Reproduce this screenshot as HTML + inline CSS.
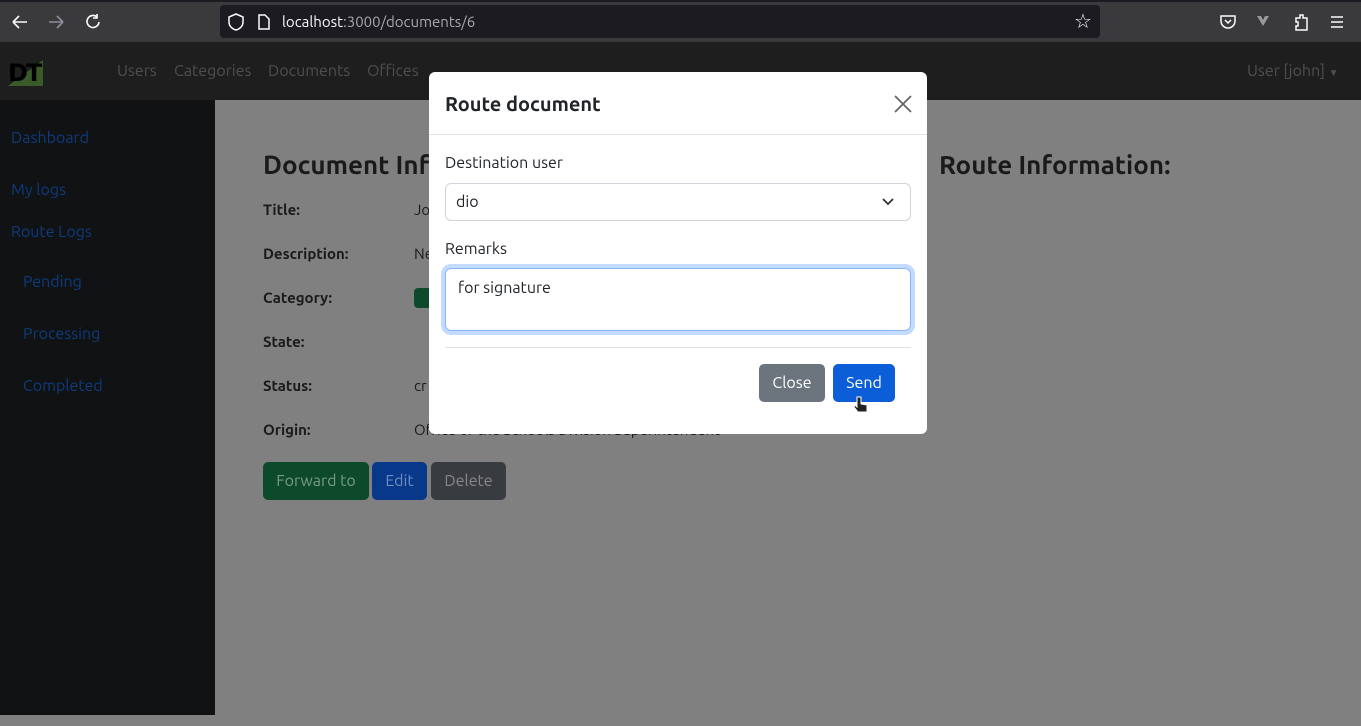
<!DOCTYPE html>
<html><head><meta charset="utf-8"><style>
*{box-sizing:border-box;margin:0;padding:0}
body{width:1361px;height:726px;overflow:hidden;background:#808080;font-family:"Ubuntu","Liberation Sans","DejaVu Sans",sans-serif;position:relative}
.abs{position:absolute}
.tb{left:0;top:0;width:1361px;height:42px;background:#3a3a3d;border-top:2px solid #1c1b22}
.url{left:220px;top:5px;width:880px;height:33px;background:#1c1b22;border-radius:4px;color:#fbfbfe;font-size:15px;line-height:33px;padding-left:62px}
.nav{left:0;top:42px;width:1361px;height:58px;background:#1e1e1e}
.nav a{position:absolute;top:20px;color:#4d4f52;font-size:16px}
.side{left:0;top:100px;width:215px;height:615px;background:#111214}
.side div{position:absolute;color:#0d3b7e;font-size:16px}
.lbl{position:absolute;left:263px;font-weight:bold;font-size:15px;color:#1a1a1a}
.val{position:absolute;left:414px;font-size:15px;color:#1a1a1a}
.btn{position:absolute;top:462px;height:38px;border-radius:5px;font-size:16px;line-height:38px;text-align:center}
.modal{left:429px;top:72px;width:498px;height:362px;background:#fff;border-radius:6px}
</style></head><body>
<div class="abs tb"></div>
<svg class="abs" style="left:8px;top:10px" width="100" height="24" fill="none" stroke="#fbfbfe" stroke-width="1.6">
<path d="M5 12h14M5 12l6-6M5 12l6 6"/>
<path d="M41 12h14M55 12l-6-6M55 12l-6 6" stroke="#8f8f9d"/>
<path d="M89 7a6 6 0 1 0 2 5M89 4v4h-4"/>
</svg>
<div class="abs url">localhost<span style="color:#aaa">:3000/documents/6</span></div>
<svg class="abs" style="left:226px;top:12px" width="48" height="20" fill="none" stroke="#fbfbfe" stroke-width="1.5">
<path d="M10 2l7 3v5c0 4-3 7-7 8-4-1-7-4-7-8V5z"/><path d="M33 3h6l4 4v10H33z"/></svg>
<div class="abs" style="left:1074px;top:9px;color:#fbfbfe;font-size:20px">☆</div>
<svg class="abs" style="left:1218px;top:12px" width="130" height="20" fill="none" stroke="#fbfbfe" stroke-width="1.5">
<path d="M3 4h14v5a7 7 0 0 1-14 0z M7 8l3 3 3-3"/>
<path d="M39 4l6 10 6-10h-4l-2 4-2-4z" fill="#9a9a9a" stroke="none"/>
<path d="M78 6h4V3h3v3h4v12h-11v-4h2v-4h-2z"/>
<path d="M113 5h12M113 10h12M113 15h12"/></svg>
<div class="abs nav">
<div class="abs" style="left:8px;top:18px;width:35px;height:26px;background:#3a5a28;clip-path:polygon(100% 0,100% 100%,0 100%)"></div>
<div class="abs" style="left:8px;top:17px;font-weight:900;font-size:24px;color:#000;font-family:'DejaVu Sans',sans-serif;letter-spacing:-2px">DT</div>
<a style="left:117px">Users</a><a style="left:174px">Categories</a><a style="left:268px">Documents</a><a style="left:367px">Offices</a>
<a style="left:1247px">User [john] <span style="font-size:10px">▼</span></a>
</div>
<div class="abs side">
<div style="left:11px;top:29px">Dashboard</div>
<div style="left:11px;top:81px">My logs</div>
<div style="left:11px;top:123px">Route Logs</div>
<div style="left:23px;top:173px">Pending</div>
<div style="left:23px;top:225px">Processing</div>
<div style="left:23px;top:277px">Completed</div>
</div>
<div class="abs" style="left:263px;top:150px;font-size:26px;font-weight:bold;color:#1a1a1a">Document Information:</div>
<div class="abs" style="left:939px;top:150px;font-size:26px;font-weight:bold;color:#1a1a1a">Route Information:</div>
<div class="lbl" style="top:201px">Title:</div><div class="val" style="top:201px">Jo</div>
<div class="lbl" style="top:245px">Description:</div><div class="val" style="top:245px">Ne</div>
<div class="lbl" style="top:289px">Category:</div><div class="abs" style="left:414px;top:288px;width:30px;height:20px;background:#0d4a2b;border-radius:4px"></div>
<div class="lbl" style="top:333px">State:</div>
<div class="lbl" style="top:377px">Status:</div><div class="val" style="top:377px">cr</div>
<div class="lbl" style="top:421px">Origin:</div><div class="val" style="top:421px">Office of the Schools Division Superintendent</div>
<div class="btn" style="left:263px;width:106px;background:#0c4a2b;color:#7a9a88">Forward to</div>
<div class="btn" style="left:372px;width:55px;background:#07388a;color:#6f8cbf">Edit</div>
<div class="btn" style="left:431px;width:75px;background:#383b3f;color:#888">Delete</div>
<div class="abs modal">
<div class="abs" style="left:16px;top:20px;font-size:20px;font-weight:bold;color:#212529">Route document</div>
<svg class="abs" style="left:465px;top:23px" width="18" height="18" stroke="#666" stroke-width="1.8"><path d="M1 1l16 16M17 1L1 17"/></svg>
<div class="abs" style="left:0;top:62px;width:498px;height:1px;background:#dee2e6"></div>
<div class="abs" style="left:16px;top:82px;font-size:16px;color:#212529">Destination user</div>
<div class="abs" style="left:16px;top:111px;width:466px;height:38px;border:1px solid #ced4da;border-radius:6px;font-size:16px;line-height:36px;padding-left:10px;color:#212529">dio</div>
<svg class="abs" style="left:453px;top:126px" width="12" height="8" fill="none" stroke="#333" stroke-width="1.8"><path d="M1 1l5 5 5-5"/></svg>
<div class="abs" style="left:16px;top:168px;font-size:16px;color:#212529">Remarks</div>
<div class="abs" style="left:16px;top:196px;width:466px;height:63px;border:1px solid #86b7fe;border-radius:6px;box-shadow:0 0 0 4px #c2dbfe;font-size:16px;padding:10px 12px;color:#212529">for signature</div>
<div class="abs" style="left:16px;top:275px;width:466px;height:1px;background:#dee2e6"></div>
<div class="abs" style="left:330px;top:292px;width:66px;height:38px;background:#6c757d;color:#fff;border-radius:5px;font-size:16px;line-height:38px;text-align:center">Close</div>
<div class="abs" style="left:404px;top:292px;width:62px;height:38px;background:#0b5ed7;color:#fff;border-radius:5px;font-size:16px;line-height:38px;text-align:center">Send</div>
<svg class="abs" style="left:424px;top:323px" width="16" height="20"><path d="M4 2v10l-2-2-1 2 4 5h9v-7l-6-1V2z" fill="#222" stroke="#fff" stroke-width="1"/></svg>
</div>
</body></html>
